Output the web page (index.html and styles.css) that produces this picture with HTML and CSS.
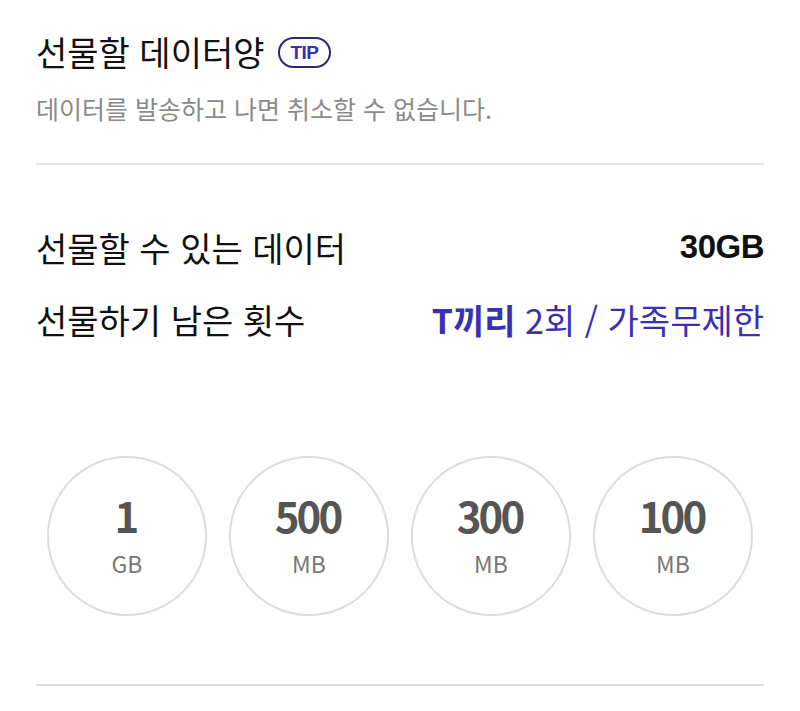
FILE: index.html
```html
<!DOCTYPE html>
<html lang="ko">
<head>
    <meta charset="UTF-8">
    <meta name="viewport" content="width=device-width, initial-scale=1.0">
    <title>데이터 선물하기</title>
    <link rel="stylesheet" href="styles.css">
</head>
<body>
    <div class="gift-container">
        <div class="head-section">
            <h1 class="title">선물할 데이터양 <span class="tip-badge">TIP</span></h1>
            <p class="subtitle">데이터를 발송하고 나면 취소할 수 없습니다.</p>
        </div>

        <div class="info-section">
            <div class="info-row">
                <span class="label">선물할 수 있는 데이터</span>
                <span class="value strong">30GB</span>
            </div>
            <div class="info-row">
                <span class="label">선물하기 남은 횟수</span>
                <span class="value blue"><b>T끼리</b> 2회 / 가족무제한</span>
            </div>
        </div>

        <div class="amount-section">
            <button class="amount-btn"><span class="num">1</span><span class="unit">GB</span></button>
            <button class="amount-btn"><span class="num">500</span><span class="unit">MB</span></button>
            <button class="amount-btn"><span class="num">300</span><span class="unit">MB</span></button>
            <button class="amount-btn"><span class="num">100</span><span class="unit">MB</span></button>
        </div>
    </div>
</body>
</html>
```

FILE: styles.css
```css
body {
    margin: 0;
    background-color: #fff;
    font-family: "Noto Sans CJK KR", "Noto Sans", sans-serif;
    color: #111;
}

.gift-container {
    padding: 0 36px;
}

.head-section {
    padding-top: 28px;
    padding-bottom: 38px;
    border-bottom: 2px solid #e6e6e6;
}

.title {
    margin: 0;
    font-size: 34px;
    font-weight: 400;
    line-height: 48px;
    display: flex;
    align-items: center;
    gap: 14px;
}

.tip-badge {
    display: inline-block;
    border: 2px solid #2b2878;
    border-radius: 16px;
    padding: 0 10px;
    height: 27px;
    line-height: 27px;
    font-family: "Liberation Sans", Arial, sans-serif;
    font-size: 19px;
    font-weight: 700;
    color: #3a30b4;
    letter-spacing: -0.5px;
}

.subtitle {
    margin: 15px 0 0;
    font-size: 25px;
    line-height: 34px;
    color: #8a8a8a;
}

.info-section {
    padding-top: 46px;
}

.info-row {
    display: flex;
    justify-content: space-between;
    align-items: center;
    height: 72px;
}

.label {
    font-size: 34px;
}

.value {
    font-size: 34px;
}

.strong {
    font-family: "Liberation Sans", Arial, sans-serif;
    font-weight: 700;
    font-size: 33px;
    letter-spacing: -0.5px;
}

.blue {
    color: #3a30b4;
}

.blue b {
    font-weight: 700;
}

.amount-section {
    display: flex;
    justify-content: space-around;
    margin-top: 101px;
    padding-bottom: 68px;
    border-bottom: 2px solid #dcdcdc;
}

.amount-btn {
    width: 160px;
    height: 160px;
    border-radius: 50%;
    border: 2px solid #dcdcdc;
    background-color: #fff;
    display: flex;
    flex-direction: column;
    align-items: center;
    justify-content: center;
    padding: 0 0 2px;
    font-family: "Noto Sans CJK KR", "Noto Sans", sans-serif;
    cursor: pointer;
}

.num {
    font-size: 42px;
    font-weight: 700;
    color: #555;
    line-height: 44px;
    letter-spacing: -3px;
    text-indent: -3px;
}

.unit {
    font-size: 23px;
    color: #777;
    line-height: 30px;
    margin-top: 11px;
}
```
